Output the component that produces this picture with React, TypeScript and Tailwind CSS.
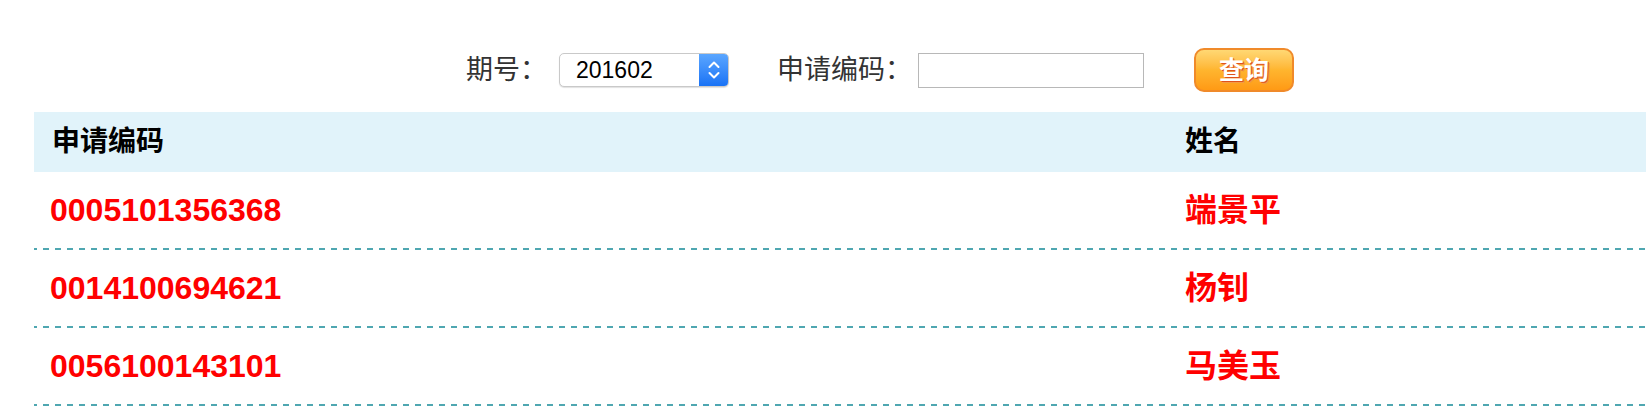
const rows = [
  { code: "0005101356368", name: "端景平" },
  { code: "0014100694621", name: "杨钊" },
  { code: "0056100143101", name: "马美玉" },
];

const ChevronUpDown = () => (
  <svg width="14" height="22" viewBox="0 0 14 22" fill="none">
    <path d="M2.5 8 L7 3.5 L11.5 8" stroke="white" strokeWidth="2" strokeLinecap="round" strokeLinejoin="round" />
    <path d="M2.5 14 L7 18.5 L11.5 14" stroke="white" strokeWidth="2" strokeLinecap="round" strokeLinejoin="round" />
  </svg>
);

export default function App() {
  return (
    <div className="w-full h-[406px] overflow-hidden bg-white font-['Liberation_Sans','Noto_Sans_CJK_SC',sans-serif]">
      <div className="ml-[34px] w-[1692px]">
        {/* search bar */}
        <div className="flex items-center justify-center h-[44px] mt-[48px] mb-[20px]">
          <span className="text-[27px] text-[#333] leading-none">期号：</span>
          <div className="ml-[12px] flex h-[34px] w-[170px] rounded-[5px] border border-[#c9c9c9] bg-white shadow-[0_1px_1px_rgba(0,0,0,0.12)] overflow-hidden">
            <div className="flex-1 flex items-center pl-4 text-[23px] text-black leading-none">201602</div>
            <div className="w-[29px] flex items-center justify-center bg-gradient-to-b from-[#5aa6ff] to-[#1872f5]">
              <ChevronUpDown />
            </div>
          </div>
          <span className="ml-[48px] text-[27px] text-[#333] leading-none">申请编码：</span>
          <input className="ml-[6px] h-[35px] w-[226px] border border-[#b8b8b8] bg-white outline-none" />
          <button className="ml-[50px] h-[44px] w-[100px] rounded-[10px] border-2 border-[#f08a2a] bg-gradient-to-b from-[#ffd873] via-[#ffb52e] to-[#ff9a14] flex items-center justify-center">
            <span className="text-[25px] font-bold text-white leading-none [text-shadow:1px_1px_0_#e0531c,2px_2px_0_#f39a45]">查询</span>
          </button>
        </div>

        {/* table */}
        <div className="grid grid-cols-[1133px_1fr] h-[60px] items-center bg-[#e1f3fa] text-[28px] font-bold text-black">
          <div className="pl-[18px]">申请编码</div>
          <div className="pl-[18px]">姓名</div>
        </div>
        {rows.map((r) => (
          <div key={r.code}>
            <div className="grid grid-cols-[1133px_1fr] h-[76px] items-center text-[32px] font-bold text-[#ff0000]">
              <div className="pl-[16px]">{r.code}</div>
              <div className="pl-[18px]">{r.name}</div>
            </div>
            {/* dashed divider */}
            <div className="h-[2px] bg-[repeating-linear-gradient(90deg,#4fa7b1_0_3px,transparent_3px_9px,#4fa7b1_9px_12px)]" />
          </div>
        ))}
      </div>
    </div>
  );
}
